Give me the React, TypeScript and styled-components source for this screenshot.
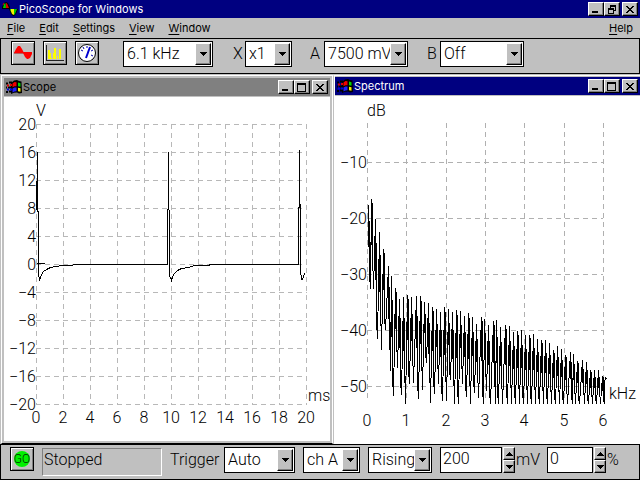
import React from "react";
import styled, { createGlobalStyle, css } from "styled-components";

const GlobalStyle = createGlobalStyle`
  *, *::before, *::after { box-sizing: border-box; }
  body { margin: 0; background: #c0c0c0; color: #000; }
  button, select, input { font: inherit; color: inherit; margin: 0; padding: 0; border-radius: 0; }
`;

const uiFont = css`
  font-family: "Inter", "Liberation Sans", sans-serif;
  font-size: 11px;
  line-height: 18px;
`;

const lightFont = css`
  font-family: "Roboto", "Liberation Sans", sans-serif;
  font-weight: 300;
  font-size: 16px;
  line-height: 24px;
`;

const raised = css`
  background: #c0c0c0;
  border: 1px solid;
  border-color: #fff #000 #000 #fff;
  box-shadow: inset -1px -1px 0 #808080;
`;

const Page = styled.div`
  display: flex;
  flex-direction: column;
  min-height: 100vh;
  background: #c0c0c0;
`;

const TitleBar = styled.header<{ $tone: "active" | "inactive" }>`
  ${uiFont}
  display: flex;
  align-items: center;
  height: 18px;
  padding: 0 2px;
  gap: 1px;
  background: ${(p) => (p.$tone === "active" ? "#000080" : "#808080")};
  color: ${(p) => (p.$tone === "active" ? "#fff" : "#000")};
`;

const TitleText = styled.h1`
  flex: 1;
  margin: 0;
  font: inherit;
  white-space: nowrap;
`;

const CaptionButtons = styled.div`
  display: flex;
  & > :last-child { margin-left: 2px; }
`;

const CaptionButton = styled.button`
  ${raised}
  display: grid;
  place-items: center;
  width: 16px;
  height: 14px;
`;

const MenuBar = styled.nav`
  ${uiFont}
  display: flex;
  height: 20px;
  padding: 0 7px;
  gap: 14px;
`;

const MenuItem = styled.button`
  border: 0;
  background: none;
  &:last-child { margin-left: auto; }
  u { text-underline-offset: 2px; }
`;

const Toolbar = styled.section`
  ${lightFont}
  display: flex;
  align-items: flex-start;
  height: 36px;
  padding: 2px 10px;
  border: 1px solid #000;
`;

const StatusBar = styled(Toolbar)`
  padding-left: 9px;
`;

const ToolGroup = styled.div`
  display: flex;
  gap: 8px;
  margin-right: 24px;
`;

const ToolButton = styled.button`
  display: grid;
  place-items: center;
  flex: none;
  width: 24px;
  height: 24px;
  background: #c0c0c0;
  border: 1px solid #000;
  box-shadow: inset 1px 1px 0 #fff, inset -1px -1px 0 #808080;
`;

const Field = styled.label<{ $after?: number }>`
  display: flex;
  flex: none;
  align-items: center;
  margin-right: ${(p) => p.$after ?? 8}px;
  white-space: nowrap;
`;

const Caption = styled.span<{ $width: number }>`
  width: ${(p) => p.$width}px;
`;

const SelectBox = styled.span<{ $width: number }>`
  display: grid;
  width: ${(p) => p.$width}px;
  height: 26px;
  & > * { grid-area: 1 / 1; }
`;

const Select = styled.select`
  appearance: none;
  min-width: 0;
  padding: 0 0 0 3px;
  background: #fff;
  border: 1px solid #000;
`;

const DropArrow = styled.span`
  ${raised}
  display: grid;
  place-items: center;
  justify-self: end;
  align-self: center;
  width: 16px;
  height: 22px;
  margin-right: 2px;
  pointer-events: none;
`;

const Workspace = styled.main`
  flex: 1;
  display: grid;
  grid-template-columns: 333fr 307fr;
`;

const ScopeWindow = styled.section`
  display: flex;
  flex-direction: column;
  margin: 1px 0 0 1px;
  padding: 2px;
  background: #c0c0c0;
  border: 1px solid #fff;
  border-bottom-color: #000;
`;

const SpectrumWindow = styled.section`
  display: flex;
  flex-direction: column;
  margin-top: 1px;
  padding: 1px 0 0 1px;
  background: #c0c0c0;
  border-top: 1px solid #fff;
  border-left: 1px solid #c0c0c0;
  box-shadow: inset 1px 0 0 #fff;
`;

const Client = styled.div`
  flex: 1;
  margin-top: 1px;
  background: #fff;
`;

const Plot = styled.svg`
  ${lightFont}
  display: block;
  width: 100%;
  height: auto;
`;

const StatusPanel = styled.output`
  flex: none;
  width: 120px;
  height: 28px;
  margin: 1px 8px 0;
  padding-left: 1px;
  line-height: 22px;
  border: 1px solid;
  border-color: #808080 #fff #fff #808080;
`;

const NumberInput = styled.input<{ $width: number }>`
  width: ${(p) => p.$width}px;
  height: 26px;
  padding: 0 0 4px 2px;
  border: 1px solid #000;
  background: #fff;
`;

const Spinner = styled.span`
  display: flex;
  flex-direction: column;
  margin: 0 1px;
`;

const SpinButton = styled.button`
  ${raised}
  display: grid;
  place-items: center;
  width: 12px;
  height: 13px;
`;

type Glyph = "min" | "max" | "restore" | "close";

function CaptionGlyph({ kind }: { kind: Glyph }) {
  return (
    <svg width="10" height="9" shapeRendering="crispEdges" fill="none" stroke="#000" aria-hidden>
      {kind === "min" && <path d="M1 7h6" strokeWidth="2" />}
      {kind === "max" && <path d="M.5 0v8.5h8V0" />}
      {kind === "max" && <path d="M0 1h9" strokeWidth="2" />}
      {kind === "restore" && (
        <>
          <path d="M3.500 3V.5h5v5H7M3 1.500h6" />
          <path d="M1.500 3.500h5v5h-5zM1 4.500h6" />
        </>
      )}
      {kind === "close" && (
        <path
          d="M1 1h2v1h1v1h2V2h1V1h2v1H8v1H7v1H6v1h1v1h1v1h1v1H7V7H6V6H4v1H3v1H1V7h1V6h1V5h1V4H3V3H2V2H1z"
          fill="#000"
          stroke="none"
        />
      )}
    </svg>
  );
}

function Captions({ middle, name }: { middle: Glyph; name: string }) {
  return (
    <CaptionButtons>
      <CaptionButton aria-label={`Minimize ${name}`}><CaptionGlyph kind="min" /></CaptionButton>
      <CaptionButton aria-label={`${middle === "max" ? "Maximize" : "Restore"} ${name}`}>
        <CaptionGlyph kind={middle} />
      </CaptionButton>
      <CaptionButton aria-label={`Close ${name}`}><CaptionGlyph kind="close" /></CaptionButton>
    </CaptionButtons>
  );
}

function PicoLogo() {
  return (
    <svg width="16" height="16" aria-hidden>
      <path d="M0 8V6l2-4 2-1 2 1 2 4v2z" fill="#000" />
      <path d="M1 7l1-4 1.500-1L4 7z" fill="#00c800" />
      <path d="M4 2l1 .5L7 7H4z" fill="#e00000" />
      <path d="M1 4l1-2" fill="none" stroke="#d00000" />
      <path d="M7 8h9l-2 5-2 2h-1l-2-2z" fill="#000" />
      <path d="M8 8h4v6l-2-1z" fill="#f8f000" />
      <path d="M12 8h3l-2 5-1 1z" fill="#00c800" />
      <path d="M8 8h1v3z" fill="#00c800" />
    </svg>
  );
}

function WindowsFlag() {
  return (
    <svg width="16" height="16" aria-hidden>
      <path d="M5 4l3-2.500 3-.5 2 1 2.500.5L16 14l-3 .5-2-1-3 .2L5 15z" fill="#000" />
      <path d="M0 4.500h2M3 3.500h3M0 13h2M3 12.500h3M0 8.500h1M2 8.500h4" stroke="#000" strokeWidth="2" />
      <path d="M1 6.500h2M4 6h2" stroke="#e00000" strokeWidth="2" />
      <path d="M1 10.500h2M4 10.500h2" stroke="#0000e0" strokeWidth="2" />
      <path d="M6.500 4.500l2-1.500 2 .2v4l-2 .1-2 1z" fill="#f00000" />
      <path d="M12 3.500l2.500.8v3.500L12 7.300z" fill="#00d800" />
      <path d="M6.500 9.500l2-1 2 .1v3.700l-2 .1-2 1z" fill="#2020ff" />
      <path d="M12 8.700l2.500.6v3.500L12 12.300z" fill="#f8f000" />
    </svg>
  );
}

function Triangle({ up }: { up?: boolean }) {
  return (
    <svg width="8" height="4" shapeRendering="crispEdges" aria-hidden>
      <path d={up ? "M0 4L4 0L8 4z" : "M0 0h8L4 4z"} />
    </svg>
  );
}

function Dropdown({ label, width, value, options }: { label: string; width: number; value: string; options: string[] }) {
  return (
    <SelectBox $width={width}>
      <Select aria-label={label} defaultValue={value}>
        {options.map((o) => <option key={o}>{o}</option>)}
      </Select>
      <DropArrow><Triangle /></DropArrow>
    </SelectBox>
  );
}

function Spin({ label }: { label: string }) {
  return (
    <Spinner>
      <SpinButton aria-label={`Increase ${label}`}><Triangle up /></SpinButton>
      <SpinButton aria-label={`Decrease ${label}`}><Triangle /></SpinButton>
    </Spinner>
  );
}

const scopeTrace =
  "32,112 32,84 33,84 33,54 33,113 34,115 34,176 35,183 36,180 37,177 39,174 42,172 46,170 52,169 58,168 68,168 69,167 " +
  "163,167 163,112 164,112 164,54 164,112 165,113 165,178 167,183 168,179 170,176 173,173 177,171 184,170 190,168 204,168 206,167 " +
  "294,167 294,110 295,110 295,52 295,107 296,107 296,172 297,182 298,182 300,176";

function ScopePlot() {
  const steps = Array.from({ length: 11 }, (_, i) => i);
  return (
    <Plot viewBox="0 0 326 343" role="img" aria-label="Scope trace in volts over milliseconds">
      <g stroke="#b8b8b8" strokeDasharray="5 4" shapeRendering="crispEdges">
        {steps.map((i) => (
          <React.Fragment key={i}>
            <line x1="32" x2="303" y1={27.5 + i * 28} y2={27.5 + i * 28} />
            <line y1="27" y2="308" x1={32.5 + i * 27} x2={32.5 + i * 27} />
          </React.Fragment>
        ))}
      </g>
      <text x="32" y="19">V</text>
      <text x="304" y="304">ms</text>
      {steps.map((i) => {
        const volts = 20 - i * 4;
        return (
          <React.Fragment key={i}>
            <text x="32" y={33 + i * 28} textAnchor="end">{volts < 0 ? `−${-volts}` : volts}</text>
            <text x={32 + i * 27} y="326" textAnchor="middle">{i * 2}</text>
          </React.Fragment>
        );
      })}
      <g fill="none" stroke="#000" shapeRendering="crispEdges" transform="translate(.5 .5)">
        <path d="M32 166h8" />
        <polyline points={scopeTrace} />
      </g>
    </Plot>
  );
}

/* One entry for each lobe: [x, crest, trough]. */
const lobes: [number, number, number][] = [
  [33, 108, 192], [36, 103, 192], [40, 123, 242], [44, 136, 253], [48, 153, 233], [53, 170, 274],
  [56, 180, 299], [60, 192, 271], [64, 203, 298], [68, 201, 307], [72, 199, 287], [76, 201, 286],
  [81, 200, 302], [85, 200, 293], [89, 206, 266], [93, 207, 306], [97, 211, 297], [101, 213, 287],
  [105, 216, 304], [109, 211, 304], [113, 213, 283], [117, 216, 307], [121, 214, 307], [125, 215, 287],
  [129, 220, 300], [133, 217, 307], [137, 221, 296], [141, 228, 301], [146, 221, 307], [149, 223, 294],
  [153, 229, 307], [158, 225, 307], [161, 224, 307], [165, 231, 307], [170, 229, 307], [174, 230, 307],
  [178, 236, 307], [182, 235, 307], [186, 234, 307], [190, 239, 307], [194, 239, 307], [198, 238, 307],
  [202, 243, 307], [206, 244, 307], [210, 244, 307], [214, 247, 307], [218, 254, 307], [222, 250, 307],
  [226, 253, 307], [230, 259, 307], [235, 256, 307], [238, 258, 307], [242, 265, 307], [247, 264, 307],
  [251, 266, 307], [255, 274, 307], [259, 274, 307], [263, 274, 307], [267, 280, 307],
];

const spectrumTrace = lobes
  .map(([x, crest, trough], i) => {
    const at = (share: number) => crest + Math.round((trough - crest) * share);
    const shoulder = at(i % 3 === 1 ? 0.05 : 0.2);
    return `${x},${crest} ${x},${at(0.5)} ${x + 1},${shoulder} ${x + 1},${at(i % 2 ? 0.6 : 0.85)} ${x + 2},${trough}`;
  })
  .join(" ") + " 269,286 270,281 271,283";

function SpectrumPlot() {
  const columns = [32, 71, 111, 150, 189, 229, 268];
  return (
    <Plot viewBox="0 0 305 347" role="img" aria-label="Spectrum in decibels over kilohertz">
      <g stroke="#b0b0b0" strokeDasharray="5 4" shapeRendering="crispEdges">
        {[66, 122, 178, 234, 290].map((y) => <line key={y} x1="32" x2="268" y1={y + 0.5} y2={y + 0.5} />)}
        {columns.map((x) => <line key={x} x1={x + 0.5} x2={x + 0.5} y1="27" y2="304" />)}
      </g>
      <text x="32" y="20">dB</text>
      <text x="274" y="303">kHz</text>
      {[10, 20, 30, 40, 50].map((db, i) => (
        <text key={db} x="32" y={72 + i * 56} textAnchor="end">{`−${db}`}</text>
      ))}
      {columns.map((x, i) => <text key={x} x={x} y="330" textAnchor="middle">{i}</text>)}
      <polyline
        points={spectrumTrace}
        fill="none"
        stroke="#000"
        strokeLinejoin="bevel"
        shapeRendering="crispEdges"
        transform="translate(.5 .5)"
      />
    </Plot>
  );
}

export default function App() {
  return (
    <Page>
      <GlobalStyle />
      <TitleBar $tone="active">
        <PicoLogo />
        <TitleText>PicoScope for Windows</TitleText>
        <Captions middle="restore" name="PicoScope" />
      </TitleBar>
      <MenuBar>
        {["File", "Edit", "Settings", "View", "Window", "Help"].map((m) => (
          <MenuItem key={m}><u>{m[0]}</u>{m.slice(1)}</MenuItem>
        ))}
      </MenuBar>

      <Toolbar>
        <ToolGroup>
          <ToolButton aria-label="Scope">
            <svg width="20" height="18" aria-hidden>
              <path d="M1 9h18" stroke="#a00" />
              <path d="M1 9l2-4 2-3h2l2 3 2 4zM10 8h9v2l-2 4-2 1h-1l-2-2-2-4z" fill="#f00" />
            </svg>
          </ToolButton>
          <ToolButton aria-label="Spectrum">
            <svg width="20" height="18" shapeRendering="crispEdges" aria-hidden>
              <path d="M1.500 1v15.500H19" fill="none" stroke="#222" />
              <path d="M3 15V6h2v3h1v5h1v1zM8 15V9h1V4h2v11zM12 15v-3h1v3zM14 15V5h2v10z" fill="#ff0" />
            </svg>
          </ToolButton>
          <ToolButton aria-label="Meter">
            <svg width="20" height="20" aria-hidden>
              <circle cx="10" cy="10" r="8.500" fill="#fff" stroke="#000" />
              <path d="M4 7l2 1M6 4l1 2M10 3v2M16 7l-2 1M16 13l-2-1" stroke="#00a" />
              <path d="M13 4l-4 11" stroke="#0000d0" strokeWidth="2" />
            </svg>
          </ToolButton>
        </ToolGroup>
        <Field $after={20}>
          <Dropdown label="Sampling rate" width={90} value="6.1 kHz" options={["6.1 kHz", "12.2 kHz"]} />
        </Field>
        <Field $after={18}>
          <Caption $width={12}>X</Caption>
          <Dropdown label="X" width={47} value="x1" options={["x1", "x2", "x5"]} />
        </Field>
        <Field $after={19}>
          <Caption $width={14}>A</Caption>
          <Dropdown label="A" width={84} value="7500 mV" options={["7500 mV", "Off"]} />
        </Field>
        <Field>
          <Caption $width={13}>B</Caption>
          <Dropdown label="B" width={84} value="Off" options={["Off", "7500 mV"]} />
        </Field>
      </Toolbar>

      <Workspace>
        <ScopeWindow>
          <TitleBar $tone="inactive">
            <WindowsFlag />
            <TitleText as="h2">Scope</TitleText>
            <Captions middle="max" name="Scope" />
          </TitleBar>
          <Client><ScopePlot /></Client>
        </ScopeWindow>
        <SpectrumWindow>
          <TitleBar $tone="active">
            <WindowsFlag />
            <TitleText as="h2">Spectrum</TitleText>
            <Captions middle="max" name="Spectrum" />
          </TitleBar>
          <Client><SpectrumPlot /></Client>
        </SpectrumWindow>
      </Workspace>

      <StatusBar>
        <ToolButton aria-label="Go">
          <svg width="20" height="20" fontFamily="Roboto, sans-serif" fontSize="12" aria-hidden>
            <circle cx="10" cy="10" r="8" fill="#00f000" />
            <text x="10" y="14" textAnchor="middle" fill="#003000">GO</text>
          </svg>
        </ToolButton>
        <StatusPanel>Stopped</StatusPanel>
        <Field>
          <Caption $width={54}>Trigger</Caption>
          <Dropdown label="Trigger" width={71} value="Auto" options={["Auto", "None"]} />
        </Field>
        <Field><Dropdown label="Trigger channel" width={57} value="ch A" options={["ch A", "ch B"]} /></Field>
        <Field><Dropdown label="Trigger direction" width={64} value="Rising" options={["Rising", "Falling"]} /></Field>
        <Field as="div" $after={8}>
          <NumberInput $width={62} aria-label="Threshold in mV" defaultValue="200" />
          <Spin label="threshold" />
          <Caption $width={23}>mV</Caption>
        </Field>
        <Field as="div" $after={0}>
          <NumberInput $width={46} aria-label="Delay in percent" defaultValue="0" />
          <Spin label="delay" />%
        </Field>
      </StatusBar>
    </Page>
  );
}
